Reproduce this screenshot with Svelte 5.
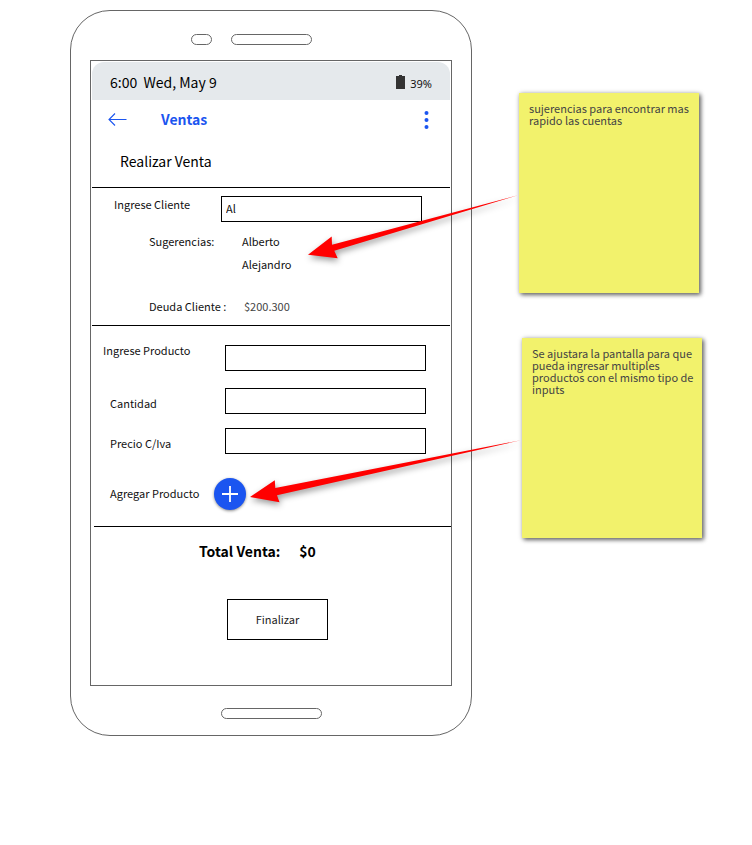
<script>
  let cliente = $state('Al');
  let producto = $state('');
  let cantidad = $state('');
  let precio = $state('');
  const sugerencias = ['Alberto', 'Alejandro'];
</script>

<main class="board">
  <section class="phone">
    <div class="speaker"><span class="pill camera"></span><span class="pill ear"></span></div>

    <div class="screen">
      <div class="status">
        <span class="time">6:00&nbsp; Wed, May 9</span>
        <svg width="9" height="14" viewBox="0 0 9 14" aria-hidden="true">
          <path d="M3 0h3v1h3v13H0V1h3z" fill="#333" />
        </svg>
        <span class="percent">39%</span>
      </div>

      <header class="bar">
        <button class="icon" aria-label="Volver">
          <svg width="20" height="14" viewBox="0 0 20 14" fill="none" stroke="#1b55f0" stroke-width="1.1">
            <path d="M18.500 6.500H1M7 .5L1 6.500l6 6" />
          </svg>
        </button>
        <h1>Ventas</h1>
        <button class="icon" aria-label="Más opciones">
          <svg width="6" height="20" viewBox="0 0 6 20" fill="#1b55f0">
            <circle cx="2.500" cy="3" r="2" /><circle cx="2.500" cy="10" r="2" /><circle cx="2.500" cy="17" r="2" />
          </svg>
        </button>
      </header>

      <h2>Realizar Venta</h2>

      <form onsubmit={(e) => e.preventDefault()}>
        <div class="client">
          <div class="field top">
            <label for="cliente">Ingrese Cliente</label>
            <input id="cliente" type="text" autocomplete="off" bind:value={cliente} />
          </div>
          <div class="pair">
            <span class="key">Sugerencias:</span>
            <ul>
              {#each sugerencias as nombre}
                <li>{nombre}</li>
              {/each}
            </ul>
          </div>
          <div class="pair debt">
            <span class="key">Deuda Cliente :</span>
            <span class="amount">$200.300</span>
          </div>
        </div>

        <div class="product">
          <div class="field first">
            <label for="producto">Ingrese Producto</label>
            <input id="producto" type="text" bind:value={producto} />
          </div>
          <div class="field">
            <label for="cantidad">Cantidad</label>
            <input id="cantidad" type="text" bind:value={cantidad} />
          </div>
          <div class="field last">
            <label for="precio">Precio C/Iva</label>
            <input id="precio" type="text" bind:value={precio} />
          </div>
          <div class="add">
            <span id="agregar">Agregar Producto</span>
            <button type="button" aria-labelledby="agregar">
              <svg width="16" height="16" viewBox="0 0 16 16" stroke="#fff" stroke-width="1.8">
                <path d="M8 0v16M0 8h16" />
              </svg>
            </button>
          </div>
        </div>

        <div class="summary">
          <p class="total"><span>Total Venta:</span><output>$0</output></p>
          <button class="finish" type="submit">Finalizar</button>
        </div>
      </form>
    </div>

    <span class="pill home"></span>
  </section>

  <aside class="notes">
    <p class="note">sujerencias para encontrar mas rapido las cuentas</p>
    <p class="note second">Se ajustara la pantalla para que pueda ingresar multiples productos con el mismo tipo de inputs</p>
  </aside>

  <svg class="arrows" width="752" height="600" viewBox="0 0 752 600" fill="#f00" aria-hidden="true">
    <path d="M308 254.7L331.7 236.5 332 244.8 518 195.2 334.3 250.8 337.7 258.2z" />
    <path d="M250 497L274.8 480.2 275.3 488 521 440.2 277 495.2 279.5 502.3z" />
  </svg>
</main>

<style>
  :global(body) {
    margin: 0;
    background: #fff;
  }
  .board {
    position: relative;
    display: flex;
    align-items: flex-start;
    gap: 47px;
    padding: 10px 45px 20px 70px;
    font-family: 'Noto Sans CJK SC', 'Noto Sans', sans-serif;
    font-size: 11px;
    line-height: 20px;
    color: #111;
  }
  .board * {
    box-sizing: border-box;
  }
  h1, h2, p, ul {
    margin: 0;
    padding: 0;
  }
  button, input {
    font: inherit;
    color: inherit;
    padding: 0;
    margin: 0;
  }
  .phone {
    display: flex;
    flex-direction: column;
    flex: 0 1 402px;
    border: 1px solid #666;
    border-radius: 40px;
    padding: 23px 19px 16px;
  }
  .pill {
    height: 11px;
    border: 1px solid #666;
    border-radius: 6px;
  }
  .speaker {
    display: flex;
    gap: 19px;
    padding: 0 0 15px 101px;
  }
  .camera {
    width: 21px;
  }
  .ear {
    width: 81px;
  }
  .home {
    width: 101px;
    margin: 22px 0 0 131px;
  }
  .screen {
    border: 1px solid #666;
    padding: 1px 1px 45px;
  }
  .status {
    display: flex;
    align-items: center;
    height: 38px;
    padding: 0 18px;
    border-radius: 12px 12px 0 0;
    background: #e5e9ec;
  }
  .status svg {
    margin-top: 2px;
  }
  .time {
    flex: 1;
    font-size: 14px;
    padding-top: 2px;
    color: #000;
  }
  .percent {
    font-family: 'Noto Sans', sans-serif;
    margin-left: 5px;
    padding-top: 5px;
  }
  .bar {
    display: flex;
    align-items: center;
    height: 40px;
    padding: 0 20px 0 16px;
    color: #1b55f0;
  }
  h1 {
    flex: 1;
    margin-left: 33px;
    padding-bottom: 2px;
    font-size: 14px;
    font-weight: 700;
  }
  .icon {
    display: flex;
    border: 0;
    background: none;
  }
  h2 {
    padding: 11px 28px 16px;
    font-size: 14px;
    font-weight: 400;
    color: #000;
  }
  form {
    line-height: 18px;
  }
  .client, .product, .summary {
    border-top: 1px solid #000;
  }
  .client {
    padding: 7px 28px 10px 22px;
  }
  .field {
    display: flex;
    justify-content: space-between;
    align-items: flex-end;
  }
  label {
    padding-bottom: 2px;
  }
  input {
    width: 201px;
    height: 26px;
    border: 1px solid #000;
    border-radius: 0;
    padding: 0 4px 2px;
    background: none;
  }
  .top, .first {
    align-items: flex-start;
  }
  .top input {
    margin-top: 1px;
  }
  .pair {
    display: flex;
    align-items: flex-start;
    padding: 10px 0 0 35px;
  }
  .key {
    width: 93px;
  }
  ul {
    list-style: none;
  }
  li {
    margin-bottom: 5px;
  }
  .debt {
    padding-top: 19px;
  }
  .amount {
    padding-left: 2px;
    color: #444;
  }
  .product {
    padding: 15px 24px 16px 18px;
  }
  .first {
    margin: 0 0 17px -7px;
  }
  .first input {
    margin-top: 4px;
  }
  .last {
    margin-top: 14px;
  }
  .add {
    display: flex;
    align-items: center;
    gap: 14px;
    padding-top: 24px;
  }
  .add span {
    width: 90px;
    padding-bottom: 2px;
    white-space: nowrap;
  }
  .add button {
    display: flex;
    align-items: center;
    justify-content: center;
    width: 32px;
    height: 32px;
    border: 0;
    border-radius: 50%;
    background: #1b55f0;
    box-shadow: 0 1px 3px rgba(0, 0, 0, 0.45);
  }
  .summary {
    display: flex;
    flex-direction: column;
    align-items: flex-start;
    gap: 39px;
    margin: 0 -1px 0 2px;
    padding: 15px 0 0 105px;
    color: #000;
  }
  .total {
    display: flex;
    gap: 19px;
    font-size: 14px;
    font-weight: 700;
  }
  .finish {
    width: 101px;
    height: 41px;
    margin-left: 28px;
    padding-bottom: 2px;
    border: 1px solid #000;
    background: none;
    color: #222;
  }
  .notes {
    display: flex;
    flex-direction: column;
    gap: 45px;
    padding-top: 83px;
  }
  .note {
    width: 180px;
    height: 200px;
    padding: 9px 6px 9px 10px;
    background: #f2f26c;
    box-shadow: 1px 1px 5px rgba(0, 0, 0, 0.4), 2px 2px 4px rgba(0, 0, 0, 0.4);
    line-height: 12px;
    color: #444;
  }
  .second {
    margin-left: 3px;
  }
  .arrows {
    position: absolute;
    left: 0;
    top: 0;
    pointer-events: none;
    filter: drop-shadow(1px 3px 3px rgba(0, 0, 0, 0.4));
  }
</style>
